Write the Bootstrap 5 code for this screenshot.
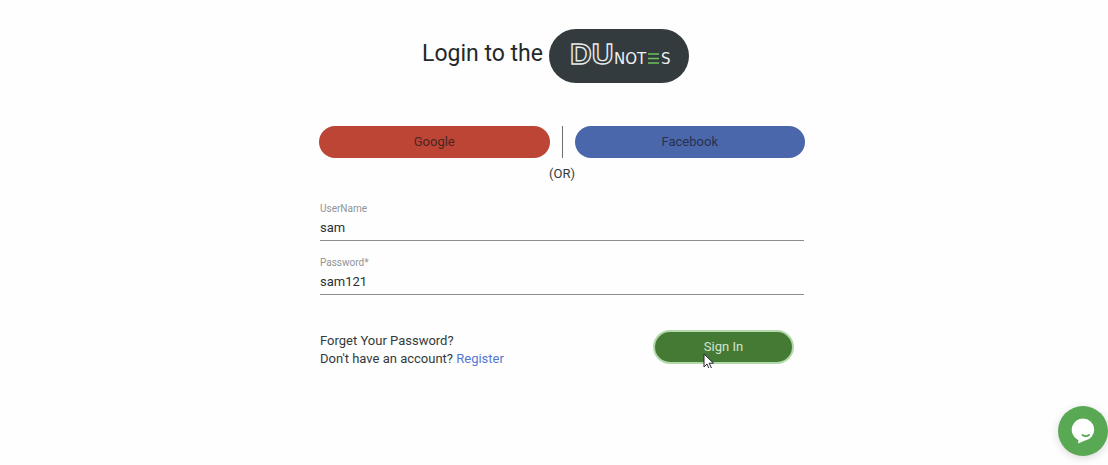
<!DOCTYPE html>
<html lang="en">
<head>
<meta charset="utf-8">
<meta name="viewport" content="width=device-width, initial-scale=1">
<title>Login - DU Notes</title>
<link rel="stylesheet" href="https://cdn.jsdelivr.net/npm/bootstrap@5.3.0/dist/css/bootstrap.min.css">
<style>
body { font-family: Roboto, "Liberation Sans", sans-serif; font-size: 13px; line-height: 18px; color: #333a3c; background: #fefefe; }
.login-title { font-size: 23px; line-height: 30px; color: #24292b; padding-top: 29px; padding-left: 3px; gap: 6px; }
.title-text { padding-top: 10px; }
.logo-pill { background: #343b3f; border-radius: 27px; padding: 8px 16px 11px 20px; }
.logo-pill svg { display: block; }
.login-panel { max-width: 486px; margin-top: 43px; }
.login-wrap { padding-left: 16px; }
.pill { border: 0; border-radius: 16px; line-height: 20px; font-size: 13px; padding: 6px 12px; height: 32px; }
.pill-google, .pill-google:hover { background: #bd4536; color: #4a2522; }
.pill-facebook, .pill-facebook:hover { background: #4b67ab; color: #283150; }
.divider { width: 1px; background: #6d7073; margin: 0 12px; }
.or-text { margin-top: 7px; margin-bottom: 20px; }
.field { border-bottom: 1px solid #8b8d90; height: 38px; margin-right: 1px; margin-left: 1px; }
.field label { display: block; font-size: 10px; line-height: 12px; color: #909396; }
.field input { display: block; width: 100%; border: 0; padding: 0; margin-top: 4px; height: 18px; line-height: 18px; background: transparent; color: #2c3134; outline: 0; }
.form-end { margin-top: 37px; padding: 0 13px 0 1px; }
.links a { color: inherit; text-decoration: none; }
.links a.register { color: #5578d0; }
.sign-in, .sign-in:hover { width: 137px; height: 30px; padding: 5px 12px; background: #457a35; color: #d5e3d0; box-shadow: 0 0 0 2px #b1d9a9; }
.pointer-mark { left: 48px; top: 21px; pointer-events: none; }
.chat { right: 0; bottom: 9px; width: 50px; height: 50px; border: 0; border-radius: 50%; background: #58a854; box-shadow: 0 2px 8px rgba(0,0,0,.15); }
</style>
</head>
<body>
<main class="container-fluid">
  <h1 class="login-title d-flex justify-content-center align-items-start fw-normal mb-0">
    <span class="title-text">Login to the</span>
    <span class="logo-pill">
      <svg width="104" height="35" viewBox="0 0 104 35" role="img" aria-label="DU Notes">
        <text x="1" y="27" fill="#343b3f" stroke="#e9ecec" stroke-width="1.4" font-family="Liberation Sans, sans-serif" font-weight="700" font-size="30">DU</text>
        <g fill="#f0f2f2" font-family="DejaVu Sans, sans-serif" font-size="15">
          <text x="45" y="27">NOT</text>
          <text x="92" y="27">S</text>
        </g>
        <path d="M79 17h11M79 21.500h11M79 26h11" stroke="#6cc15b" stroke-width="1.7"/>
      </svg>
    </span>
  </h1>
  <div class="login-wrap">
    <form class="login-panel mx-auto">
      <div class="d-flex">
        <button type="button" class="btn pill pill-google flex-fill w-50">Google</button>
        <span class="divider flex-shrink-0"></span>
        <button type="button" class="btn pill pill-facebook flex-fill w-50">Facebook</button>
      </div>
      <div class="or-text text-center">(OR)</div>
      <div class="field">
        <label for="user">UserName</label>
        <input id="user" type="text" value="sam">
      </div>
      <div class="field mt-3">
        <label for="pass">Password*</label>
        <input id="pass" type="text" value="sam121">
      </div>
      <div class="form-end d-flex justify-content-between align-items-start">
        <div class="links">
          <a href="#">Forget Your Password?</a><br>
          Don't have an account? <a class="register" href="#">Register</a>
        </div>
        <div class="position-relative">
          <button type="button" class="btn pill sign-in">Sign In</button>
          <svg class="pointer-mark position-absolute" width="12" height="20" viewBox="0 0 12 20" aria-hidden="true">
            <path d="M1 1v13l3-3 2.300 5.200 2.200-1L6.200 10.200H10.500z" fill="#fff" stroke="#24242c" stroke-width="1" stroke-linejoin="round"/>
          </svg>
        </div>
      </div>
    </form>
  </div>
</main>
<button type="button" class="chat position-fixed p-0 d-flex align-items-center justify-content-center" aria-label="Chat">
  <svg width="26" height="28" viewBox="0 0 26 28" aria-hidden="true">
    <path d="M13 1.500a11.200 11.200 0 0 0-6 20.700l1.500 1L8 26.500l6.500-2.700A11.200 11.200 0 0 0 13 1.500z" fill="#fff"/>
    <path d="M12.500 18c2 1.500 4.500 1.500 6.500 0" fill="none" stroke="#58a854" stroke-width="2" stroke-linecap="round"/>
  </svg>
</button>
<script src="https://cdn.jsdelivr.net/npm/bootstrap@5.3.0/dist/js/bootstrap.bundle.min.js"></script>
</body>
</html>
